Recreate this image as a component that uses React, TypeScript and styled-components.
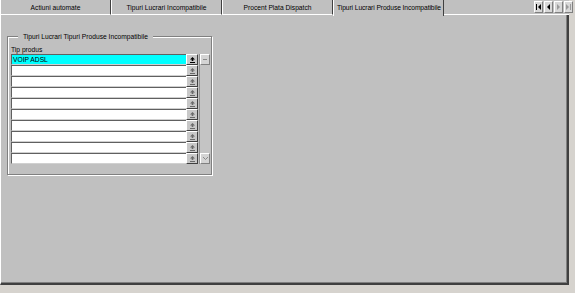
import React from 'react';
import styled, { createGlobalStyle } from 'styled-components';

const GlobalStyle = createGlobalStyle`
  html, body {
    margin: 0;
    padding: 0;
    background: #d6d3ce;
  }
  body {
    font-family: "Liberation Sans", Arial, sans-serif;
    font-size: 6.7px;
    color: #000;
  }
`;

const tabs = [
  'Actiuni automate',
  'Tipuri Lucrari Incompatibile',
  'Procent Plata Dispatch',
  'Tipuri Lucrari Produse Incompatibile'
];

const rows = ['VOIP ADSL', '', '', '', '', '', '', '', '', ''];

const Window = styled.div`
  width: 575px;
  height: 293px;
  display: flex;
  flex-direction: column;
  background: #d6d3ce;
`;

const TabStrip = styled.div`
  height: 15px;
  width: 569px;
  display: flex;
  align-items: flex-end;
  background: #c0c0c0;
  position: relative;
  z-index: 1;
`;

const Tab = styled.div<{ $active?: boolean }>`
  box-sizing: border-box;
  width: 111px;
  height: ${p => (p.$active ? '16px' : '15px')};
  margin-bottom: ${p => (p.$active ? '-1px' : '0')};
  display: flex;
  align-items: center;
  justify-content: ${p => (p.$active ? 'flex-start' : 'center')};
  padding-left: ${p => (p.$active ? '3px' : '0')};
  padding-bottom: ${p => (p.$active ? '1px' : '0')};
  letter-spacing: ${p => (p.$active ? '-0.08px' : '0')};
  border-left: 1px solid #fff;
  border-right: 1px solid #404040;
  border-bottom: ${p => (p.$active ? 'none' : '1px solid #fff')};
  background: #c0c0c0;
  white-space: nowrap;
`;

const Spacer = styled.div`
  flex: 1;
  align-self: stretch;
  border-bottom: 1px solid #fff;
  display: flex;
  justify-content: flex-end;
  align-items: flex-start;
  padding: 1px 0 0 0;
`;

const NavGroup = styled.div`
  display: flex;
  gap: 1px;
  margin-right: -4px;
`;

const NavButton = styled.div`
  box-sizing: border-box;
  width: 9px;
  height: 12px;
  background: #d8d8d8;
  border-top: 1px solid #fff;
  border-left: 1px solid #fff;
  border-right: 1px solid #808080;
  border-bottom: 1px solid #808080;
  display: flex;
  align-items: center;
  justify-content: center;
`;

const Panel = styled.div`
  box-sizing: border-box;
  width: 569px;
  height: 270px;
  background: #c0c0c0;
  border-left: 1px solid #fff;
  border-right: 2px solid #404040;
  border-bottom: 2px solid #404040;
  box-shadow: inset -1px -1px 0 #808080;
  padding: 21px 0 0 6px;
`;

const GroupBox = styled.div`
  box-sizing: border-box;
  position: relative;
  width: 205px;
  height: 139px;
  border: 1px solid #808080;
  box-shadow: inset 1px 1px 0 #fff, 1px 1px 0 #fff;
  padding: 9px 2px 0 3px;
`;

const Legend = styled.span`
  position: absolute;
  top: -5px;
  left: 10px;
  padding: 0 5px;
  background: #c0c0c0;
  line-height: 9px;
  white-space: nowrap;
`;

const FieldLabel = styled.div`
  line-height: 8px;
  height: 8px;
`;

const GridArea = styled.div`
  display: flex;
  gap: 1px;
`;

const RowList = styled.div`
  display: flex;
  flex-direction: column;
`;

const Row = styled.div`
  display: flex;
  height: 11px;
`;

const Cell = styled.div<{ $selected?: boolean }>`
  box-sizing: border-box;
  width: 175px;
  height: 11px;
  background: ${p => (p.$selected ? '#00ffff' : '#fff')};
  border-top: 1px solid #606060;
  border-left: 1px solid #606060;
  border-bottom: 1px solid #d0d0d0;
  padding-left: 1px;
  line-height: 9px;
  white-space: nowrap;
`;

const LookupButton = styled.div`
  box-sizing: border-box;
  width: 12px;
  height: 11px;
  background: #c8c8c8;
  border-top: 1px solid #fff;
  border-left: 1px solid #fff;
  border-right: 1px solid #404040;
  border-bottom: 1px solid #404040;
  display: flex;
  align-items: center;
  justify-content: center;
`;

const ScrollBar = styled.div`
  box-sizing: border-box;
  width: 11px;
  display: flex;
  flex-direction: column;
  justify-content: space-between;
  background: #c4c4c4;
  border-left: 1px solid #909090;
`;

const ScrollButton = styled.div`
  box-sizing: border-box;
  width: 10px;
  height: 11px;
  background: #d4d4d4;
  border-top: 1px solid #fff;
  border-left: 1px solid #fff;
  border-right: 1px solid #808080;
  border-bottom: 1px solid #808080;
  display: flex;
  align-items: center;
  justify-content: center;
`;

const LookupIcon = ({ dark }: { dark?: boolean }) => (
  <svg width="5" height="6" viewBox="0 0 5 6">
    <path d="M2.5 0 L5 2.5 L3.3 2.5 L3.3 4 L1.7 4 L1.7 2.5 L0 2.5 Z" fill={dark ? '#000' : '#6a6a6a'} />
    <rect x="0" y="5" width="5" height="1" fill={dark ? '#000' : '#6a6a6a'} />
  </svg>
);

const NavIcon = ({ dir, bar, enabled }: { dir: 'left' | 'right'; bar?: boolean; enabled?: boolean }) => {
  const fill = enabled ? '#000' : '#9a9a9a';
  return (
    <svg width="5" height="6" viewBox="0 0 5 6">
      {dir === 'left' ? (
        <>
          {bar && <rect x="0" y="0" width="1" height="6" fill={fill} />}
          <path d={bar ? 'M5 0 L2 3 L5 6 Z' : 'M4 0 L1 3 L4 6 Z'} fill={fill} />
        </>
      ) : (
        <>
          <path d={bar ? 'M0 0 L3 3 L0 6 Z' : 'M1 0 L4 3 L1 6 Z'} fill={fill} />
          {bar && <rect x="4" y="0" width="1" height="6" fill={fill} />}
        </>
      )}
    </svg>
  );
};

const DashIcon = () => (
  <svg width="4" height="2" viewBox="0 0 4 2">
    <rect x="0" y="0" width="4" height="1" fill="#8a8a8a" />
  </svg>
);

const DownIcon = () => (
  <svg width="5" height="3" viewBox="0 0 5 3">
    <path d="M0 0 L2.5 2.5 L5 0" stroke="#8a8a8a" fill="none" strokeWidth="1" />
  </svg>
);

export default function App() {
  return (
    <Window>
      <GlobalStyle />
      <TabStrip>
        {tabs.map((t, i) => (
          <Tab key={t} $active={i === tabs.length - 1}>{t}</Tab>
        ))}
        <Spacer>
          <NavGroup>
            <NavButton><NavIcon dir="left" bar enabled /></NavButton>
            <NavButton><NavIcon dir="left" enabled /></NavButton>
            <NavButton><NavIcon dir="right" /></NavButton>
            <NavButton><NavIcon dir="right" bar /></NavButton>
          </NavGroup>
        </Spacer>
      </TabStrip>
      <Panel>
        <GroupBox>
          <Legend>Tipuri Lucrari Tipuri Produse Incompatibile</Legend>
          <FieldLabel>Tip produs</FieldLabel>
          <GridArea>
            <RowList>
              {rows.map((r, i) => (
                <Row key={i}>
                  <Cell $selected={i === 0}>{r}</Cell>
                  <LookupButton><LookupIcon dark={i === 0} /></LookupButton>
                </Row>
              ))}
            </RowList>
            <ScrollBar>
              <ScrollButton><DashIcon /></ScrollButton>
              <ScrollButton><DownIcon /></ScrollButton>
            </ScrollBar>
          </GridArea>
        </GroupBox>
      </Panel>
    </Window>
  );
}
